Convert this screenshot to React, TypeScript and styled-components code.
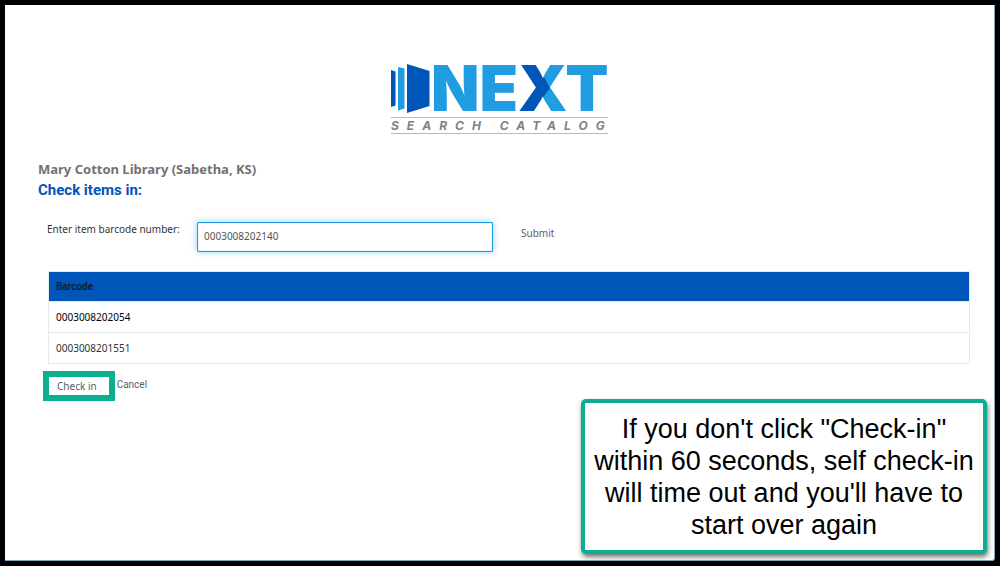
import React, { useState } from "react";
import styled, { createGlobalStyle } from "styled-components";

const GlobalStyle = createGlobalStyle`
  *, *::before, *::after { box-sizing: border-box; }
  body {
    margin: 0;
    background: #000;
    color: #333;
    font: 10px/16px "Noto Sans", sans-serif;
  }
`;

const Page = styled.div`
  position: relative;
  display: flex;
  flex-direction: column;
  min-height: 100vh;
  border: 5px solid #000;
`;

const Sheet = styled.main`
  flex: 1;
  padding: 56px 24px 24px;
  background: #fff;
  border: solid #7fa9bd;
  border-width: 0 1px 1px 0;
  border-bottom-right-radius: 3px;
`;

const LogoBar = styled.header`
  display: flex;
  justify-content: center;
  margin-bottom: 17px;
`;

const Content = styled.section`
  padding-left: 9px;
`;

const Headings = styled.div`
  margin-bottom: 21px;
`;

const LibraryName = styled.h1`
  margin: 0;
  font-size: 13px;
  line-height: 22px;
  font-weight: 700;
  color: #727272;
`;

const SectionTitle = styled.h2`
  margin: 0;
  font: 700 15px/20px Roboto, sans-serif;
  color: #0055b8;
`;

const Form = styled.form`
  display: grid;
  grid-template-columns: 150px 296px auto;
  justify-content: start;
  align-items: start;
  padding-left: 9px;
  margin-bottom: 19px;
`;

const FieldLabel = styled.label`
  white-space: nowrap;
`;

const BarcodeInput = styled.input`
  height: 30px;
  margin-top: 1px;
  padding: 0 6px 2px;
  border: 1px solid #209ce0;
  border-radius: 1px;
  outline: none;
  box-shadow: 0 0 6px rgba(32, 156, 224, 0.5), inset 0 0 1px #209ce0;
  font: inherit;
  color: #555;
`;

const TextButton = styled.button`
  padding: 0;
  border: 0;
  background: none;
  font: inherit;
  color: #606060;
  cursor: pointer;
`;

const SubmitButton = styled(TextButton)`
  justify-self: start;
  margin: 4px 0 0 28px;
`;

const Items = styled.table`
  width: calc(100% - 10px);
  margin-left: 10px;
  border-collapse: collapse;
  border: 1px solid #e6eaeb;
`;

const HeadCell = styled.th`
  height: 30px;
  padding: 0 7px;
  background: #0055b8;
  text-align: left;
  font: 500 10px/16px Roboto, sans-serif;
  color: #0b1a2c;
`;

const Cell = styled.td<{ $strong?: boolean }>`
  height: 31px;
  padding: 0 7px;
  border-top: 1px solid #e6eaeb;
  color: ${(p) => (p.$strong ? "#000" : "#333")};
`;

const Actions = styled.div`
  display: flex;
  align-items: flex-start;
  gap: 2px;
  margin: 7px 0 0 5px;
`;

const CheckInButton = styled(TextButton)`
  height: 30px;
  padding: 0 12px 0 8px;
  border: 6px solid #0aae90;
`;

const CancelButton = styled(TextButton)`
  font-family: Roboto, sans-serif;
  margin-top: 6px;
`;

const Callout = styled.aside`
  position: absolute;
  right: 8px;
  bottom: 7px;
  width: 406px;
  padding: 10px 0 9px;
  border: 4px solid #0aae90;
  border-radius: 5px;
  background: #fff;
  box-shadow: 1px 3px 5px rgba(0, 0, 0, 0.55);
  text-align: center;
  font: 27px/32px "Liberation Sans", sans-serif;
  color: #000;
`;

const LogoDrawing = styled.svg`
  display: block;
  overflow: visible;
`;

const Wordmark = styled.text`
  font: 900 63px Inter, sans-serif;
  fill: #209ce0;
`;

const Tagline = styled.text`
  font: italic 700 12px Inter, sans-serif;
  letter-spacing: 8px;
  fill: #808285;
`;

function Logo() {
  return (
    <LogoDrawing width="217" height="80" viewBox="0 0 217 80" role="img" aria-label="NEXT Search Catalog">
      <defs>
        <pattern id="cross" patternUnits="userSpaceOnUse" width="217" height="80">
          <rect width="217" height="80" fill="#209ce0" />
          <path d="M120 0H147V5L159 27L147 43L152 60H120Z" fill="#0055b8" />
        </pattern>
      </defs>
      <path d="M0 9L4.500 10.500V44.500L0 46Z" fill="#0055b8" />
      <path d="M7 6L13.500 7.500V47.500L7 49.500Z" fill="#209ce0" />
      <path d="M16 3L38.500 10V45L16 52Z" fill="#0055b8" />
      <Wordmark x="40" y="50">
        NE<tspan fill="url(#cross)">X</tspan>T
      </Wordmark>
      <path d="M0 56.5H217M0 72.5H217" stroke="#b9babc" />
      <Tagline x="0" y="69">SEARCH CATALOG</Tagline>
    </LogoDrawing>
  );
}

const scanned = ["0003008202054", "0003008201551"];

export default function App() {
  const [barcode, setBarcode] = useState("0003008202140");
  return (
    <>
      <GlobalStyle />
      <Page>
        <Sheet>
          <LogoBar>
            <Logo />
          </LogoBar>
          <Content>
            <Headings>
              <LibraryName>Mary Cotton Library (Sabetha, KS)</LibraryName>
              <SectionTitle>Check items in:</SectionTitle>
            </Headings>
            <Form onSubmit={(e) => e.preventDefault()}>
              <FieldLabel htmlFor="barcode">Enter item barcode number:</FieldLabel>
              <BarcodeInput id="barcode" value={barcode} onChange={(e) => setBarcode(e.target.value)} />
              <SubmitButton type="submit">Submit</SubmitButton>
            </Form>
            <Items>
              <thead>
                <tr>
                  <HeadCell scope="col">Barcode</HeadCell>
                </tr>
              </thead>
              <tbody>
                {scanned.map((code, i) => (
                  <tr key={code}>
                    <Cell $strong={i === 0}>{code}</Cell>
                  </tr>
                ))}
              </tbody>
            </Items>
            <Actions>
              <CheckInButton type="button">Check in</CheckInButton>
              <CancelButton type="button">Cancel</CancelButton>
            </Actions>
          </Content>
        </Sheet>
        <Callout>
          If you don't click "Check-in" within 60 seconds, self check-in will time out and you'll have to start over again
        </Callout>
      </Page>
    </>
  );
}
